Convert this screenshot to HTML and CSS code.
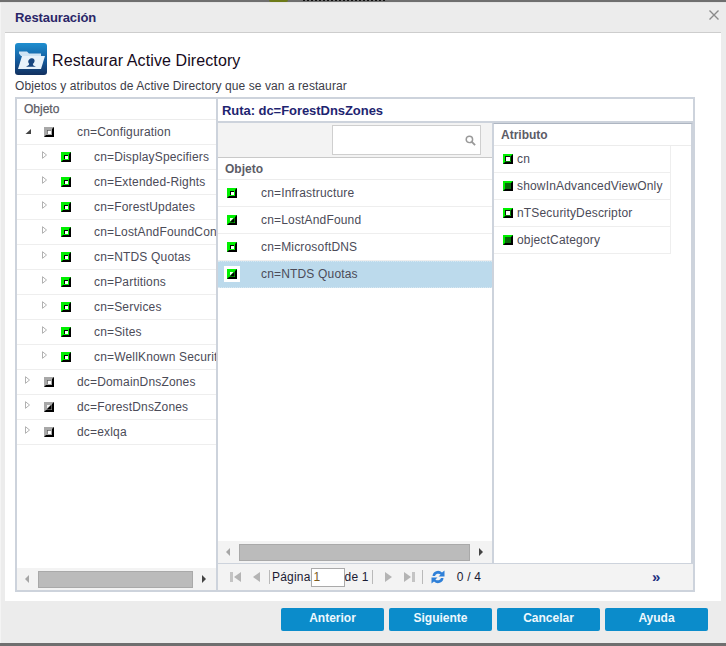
FILE: index.html
```html
<!DOCTYPE html>
<html lang="es">
<head>
<meta charset="utf-8">
<title>Restauración</title>
<link rel="stylesheet" href="styles.css">
</head>
<body>
<svg class="defs" width="0" height="0" aria-hidden="true">
  <symbol id="st-green" viewBox="0 0 10 10"><rect width="10" height="10" fill="#00f000"/><path d="M10 0V10H0L2 8H8V2Z" fill="#000"/><rect x="3" y="3" width="4" height="4" fill="#000"/><rect x="4" y="4" width="3" height="3" fill="#fff"/></symbol>
  <symbol id="st-gray" viewBox="0 0 10 10"><rect width="10" height="10" fill="#a8a8a8"/><path d="M10 0V10H0L2 8H8V2Z" fill="#000"/><rect x="3" y="3" width="4" height="4" fill="#555"/><rect x="3.7" y="3.7" width="3.3" height="3.3" fill="#fff"/></symbol>
  <symbol id="st-green-half" viewBox="0 0 10 10"><rect width="10" height="10" fill="#00f000"/><path d="M10 0V10H0L2 8H8V2Z" fill="#000"/><path d="M2.5 7.5L7.5 2.5V7.5Z" fill="#000"/><path d="M3 6.5L6.5 3H3Z" fill="#fff"/></symbol>
  <symbol id="st-gray-half" viewBox="0 0 10 10"><rect width="10" height="10" fill="#a8a8a8"/><path d="M10 0V10H0L2 8H8V2Z" fill="#000"/><path d="M2.5 7.5L7.5 2.5V7.5Z" fill="#000"/><path d="M3 6.5L6.5 3H3Z" fill="#f4f4f4"/></symbol>
  <symbol id="st-dark" viewBox="0 0 10 10"><rect width="10" height="10" fill="#00f000"/><path d="M10 0V10H0L2 8H8V2Z" fill="#000"/><rect x="2" y="2" width="6" height="6" fill="#0a6a0a"/></symbol>
  <symbol id="st-white" viewBox="0 0 10 10"><rect width="10" height="10" fill="#00f000"/><path d="M10 0V10H0L2 8H8V2Z" fill="#000"/><rect x="2" y="2" width="5.5" height="5.5" fill="#111"/><rect x="3" y="3" width="4" height="4" fill="#fff"/></symbol>
  <symbol id="tw-open" viewBox="0 0 7 7"><path d="M.5 6L6 1V6Z" fill="#444"/></symbol>
  <symbol id="tw-closed" viewBox="0 0 5 8"><path d="M.5 .7L4.5 4L.5 7.3Z" fill="#fff" stroke="#a8a8a8" stroke-width=".9"/></symbol>
</svg>

<div class="topstrip"><span class="topstrip-dot"></span><span class="topstrip-dash"></span></div>

<div class="dialog">
  <header class="dialog-head">
    <h1 class="dialog-title">Restauración</h1>
    <svg class="close" viewBox="0 0 10 10" width="10" height="10"><path d="M.5 .5L9.5 9.5M9.5 .5L.5 9.5" stroke="#8a8a8a" stroke-width="1.4" fill="none"/></svg>
  </header>

  <main class="dialog-body">
    <div class="page-title">
      <svg class="folder" viewBox="0 0 32 32" width="32" height="32">
        <defs><linearGradient id="fb" x1="0" y1="0" x2="0" y2="1"><stop offset="0" stop-color="#1e8fd0"/><stop offset=".55" stop-color="#145a9c"/><stop offset="1" stop-color="#12305f"/></linearGradient></defs>
        <rect width="32" height="32" rx="3" fill="url(#fb)"/>
        <path d="M4 10.5V8.5H12L14 10.5H26V13H6Z" fill="#cfe4f4"/>
        <path d="M7 13H30L26 26H3Z" fill="#e8f2fa"/>
        <path d="M15.5 15.5c2.6-1 4.6.6 4 3-.3 1.2-1 2-1.7 2.5l.6 1.5 2.6 1.2H11l2.8-1.6.4-1.3c-.7-.6-1.2-1.6-.9-2.8.2-1 1-1.8 2.2-2.5Z" fill="#17467f"/>
      </svg>
      <h2 class="page-heading">Restaurar Active Directory</h2>
    </div>
    <p class="desc">Objetos y atributos de Active Directory que se van a restaurar</p>

    <div class="panels">
      <section class="tree-panel">
        <div class="col-head tree-head">Objeto</div>
        <div class="tree-rows">
          <div class="row tree-row l0"><svg class="tw tw-o"><use href="#tw-open"/></svg><svg class="st"><use href="#st-gray"/></svg><span class="lbl">cn=Configuration</span></div>
          <div class="row tree-row l1"><svg class="tw"><use href="#tw-closed"/></svg><svg class="st"><use href="#st-green"/></svg><span class="lbl">cn=DisplaySpecifiers</span></div>
          <div class="row tree-row l1"><svg class="tw"><use href="#tw-closed"/></svg><svg class="st"><use href="#st-green"/></svg><span class="lbl">cn=Extended-Rights</span></div>
          <div class="row tree-row l1"><svg class="tw"><use href="#tw-closed"/></svg><svg class="st"><use href="#st-green"/></svg><span class="lbl">cn=ForestUpdates</span></div>
          <div class="row tree-row l1"><svg class="tw"><use href="#tw-closed"/></svg><svg class="st"><use href="#st-green"/></svg><span class="lbl">cn=LostAndFoundConfig</span></div>
          <div class="row tree-row l1"><svg class="tw"><use href="#tw-closed"/></svg><svg class="st"><use href="#st-green"/></svg><span class="lbl">cn=NTDS Quotas</span></div>
          <div class="row tree-row l1"><svg class="tw"><use href="#tw-closed"/></svg><svg class="st"><use href="#st-green"/></svg><span class="lbl">cn=Partitions</span></div>
          <div class="row tree-row l1"><svg class="tw"><use href="#tw-closed"/></svg><svg class="st"><use href="#st-green"/></svg><span class="lbl">cn=Services</span></div>
          <div class="row tree-row l1"><svg class="tw"><use href="#tw-closed"/></svg><svg class="st"><use href="#st-green"/></svg><span class="lbl">cn=Sites</span></div>
          <div class="row tree-row l1"><svg class="tw"><use href="#tw-closed"/></svg><svg class="st"><use href="#st-green"/></svg><span class="lbl">cn=WellKnown Security</span></div>
          <div class="row tree-row l0"><svg class="tw"><use href="#tw-closed"/></svg><svg class="st"><use href="#st-gray"/></svg><span class="lbl">dc=DomainDnsZones</span></div>
          <div class="row tree-row l0"><svg class="tw"><use href="#tw-closed"/></svg><svg class="st"><use href="#st-gray-half"/></svg><span class="lbl">dc=ForestDnsZones</span></div>
          <div class="row tree-row l0"><svg class="tw"><use href="#tw-closed"/></svg><svg class="st"><use href="#st-gray"/></svg><span class="lbl">dc=exlqa</span></div>
        </div>
        <div class="scrollbar sb-tree"><span class="arrow arrow-l"></span><span class="thumb"></span><span class="arrow arrow-r"></span></div>
      </section>

      <section class="detail">
        <div class="path">Ruta: dc=ForestDnsZones</div>
        <div class="detail-cols">
          <div class="objects">
            <div class="toolbar">
              <div class="search">
                <svg class="search-ico" viewBox="0 0 12 12" width="11" height="11"><circle cx="4.8" cy="4.8" r="3.5" fill="none" stroke="#999" stroke-width="1.6"/><path d="M7.5 7.5L11 11" stroke="#999" stroke-width="2"/></svg>
              </div>
            </div>
            <div class="col-head obj-head">Objeto</div>
            <div class="obj-rows">
              <div class="row obj-row"><span class="st-wrap"><svg class="st"><use href="#st-green"/></svg></span><span class="lbl">cn=Infrastructure</span></div>
              <div class="row obj-row"><span class="st-wrap"><svg class="st"><use href="#st-green-half"/></svg></span><span class="lbl">cn=LostAndFound</span></div>
              <div class="row obj-row"><span class="st-wrap"><svg class="st"><use href="#st-green"/></svg></span><span class="lbl">cn=MicrosoftDNS</span></div>
              <div class="row obj-row selected"><span class="st-wrap"><svg class="st"><use href="#st-green-half"/></svg></span><span class="lbl">cn=NTDS Quotas</span></div>
            </div>
            <div class="scrollbar sb-obj"><span class="arrow arrow-l"></span><span class="thumb"></span><span class="arrow arrow-r"></span></div>
          </div>
          <div class="attrs">
            <div class="col-head attr-head">Atributo</div>
            <div class="row attr-row"><svg class="st"><use href="#st-white"/></svg><span class="lbl">cn</span></div>
            <div class="row attr-row"><svg class="st"><use href="#st-dark"/></svg><span class="lbl">showInAdvancedViewOnly</span></div>
            <div class="row attr-row"><svg class="st"><use href="#st-white"/></svg><span class="lbl">nTSecurityDescriptor</span></div>
            <div class="row attr-row"><svg class="st"><use href="#st-dark"/></svg><span class="lbl">objectCategory</span></div>
          </div>
        </div>
        <div class="pager">
          <svg class="pg" viewBox="0 0 14 14" width="14" height="14"><rect x="1" y="2" width="3" height="10" fill="#c4c4c4"/><path d="M12 2V12L5 7Z" fill="#b4b4b4"/></svg>
          <svg class="pg pg-prev" viewBox="0 0 10 14" width="10" height="14"><path d="M8 2V12L1 7Z" fill="#b4b4b4"/></svg>
          <span class="sep sep-a"></span>
          <span class="pg-text">Página</span><span class="pg-input">1</span><span class="pg-text">de 1</span>
          <span class="sep sep-b"></span>
          <svg class="pg pg-next" viewBox="0 0 10 14" width="10" height="14"><path d="M2 2V12L9 7Z" fill="#b4b4b4"/></svg>
          <svg class="pg pg-last" viewBox="0 0 14 14" width="14" height="14"><rect x="10" y="2" width="3" height="10" fill="#c4c4c4"/><path d="M2 2V12L9 7Z" fill="#b4b4b4"/></svg>
          <span class="sep sep-b"></span>
          <svg class="refresh" viewBox="0 0 16 16" width="16" height="16"><path d="M2.5 7A5.5 5.5 0 0 1 12 3.6L14.5 1.5V7.5H8.5L10.6 5.6A3.4 3.4 0 0 0 5 7Z" fill="#2f80d8"/><path d="M13.5 9A5.5 5.5 0 0 1 4 12.4L1.5 14.5V8.5H7.5L5.4 10.4A3.4 3.4 0 0 0 11 9Z" fill="#2f80d8"/></svg>
          <span class="pg-count">0 / 4</span>
          <span class="more">»</span>
        </div>
      </section>
    </div>
  </main>

  <footer class="dialog-foot">
    <button class="btn">Anterior</button>
    <button class="btn">Siguiente</button>
    <button class="btn">Cancelar</button>
    <button class="btn">Ayuda</button>
  </footer>
</div>
<div class="bottomstrip"></div>
</body>
</html>
```
FILE: styles.css
```css
* { box-sizing: border-box; }
html, body { margin: 0; padding: 0; }
body {
  width: 726px;
  height: 646px;
  overflow: hidden;
  background: #ececec;
  font-family: "Liberation Sans", Arial, sans-serif;
  font-size: 12px;
  color: #4b4b58;
  display: flex;
  flex-direction: column;
}
.defs { display: block; height: 0; width: 0; }
.topstrip {
  height: 3px;
  flex: none;
  background: #6f6f6f;
  border-bottom: 1px solid #e4e4e4;
  overflow: hidden;
  display: flex;
  align-items: flex-start;
  padding-left: 269px;
}
.topstrip-dot { width: 19px; height: 2px; background: #6d7a18; border-radius: 0 0 9px 9px; }
.topstrip-dash {
  width: 84px;
  height: 1px;
  margin-left: 15px;
  background: repeating-linear-gradient(90deg, #111 0 2px, transparent 2px 4px);
}
.dialog {
  flex: 1;
  min-height: 0;
  display: flex;
  flex-direction: column;
  padding-left: 5px;
  padding-right: 5px;
  border-left: 1px solid #f4f4f4;
}
.dialog-head {
  height: 30px;
  flex: none;
  border-bottom: 1px solid #cdcdcd;
  display: flex;
  align-items: center;
  justify-content: space-between;
  padding-left: 10px;
  margin-left: -1px;
}
.dialog-title {
  margin: 0;
  font-size: 13px;
  font-weight: bold;
  color: #2a2668;
  letter-spacing: -.1px;
}
.close { margin-top: -5px; margin-right: 2px; }
.dialog-body {
  background: #fff;
  height: 568px;
  flex: none;
  margin-left: -1px;
  padding: 10px 0 0 10px;
  width: 716px;
}
.page-title { display: flex; align-items: center; height: 32px; }
.folder { flex: none; }
.page-heading {
  margin: 4px 0 0 5px;
  font-size: 16px;
  font-weight: normal;
  color: #160a20;
  letter-spacing: .1px;
}
.desc { margin: 4px 0 0; height: 18px; line-height: 15px; color: #3c3c48; letter-spacing: .08px; }
.panels {
  display: flex;
  width: 680px;
  height: 495px;
  border: 2px solid #cdd3dc;
}
.tree-panel {
  width: 201px;
  flex: none;
  display: flex;
  flex-direction: column;
  border-right: 2px solid #cdd3dc;
}
.col-head {
  font-weight: bold;
  color: #5c5c66;
  border-bottom: 1px solid #ececec;
  display: flex;
  align-items: center;
}
.tree-head { height: 21px; padding-left: 7px; font-weight: normal; -webkit-text-stroke: .25px #5c5c66; }
.tree-rows { flex: 1; min-height: 0; overflow: hidden; }
.row { display: flex; align-items: center; white-space: nowrap; overflow: hidden; }
.tree-row { height: 25px; border-bottom: 1px solid #eeeeee; padding-bottom: 1px; }
.lbl { letter-spacing: .17px; }
.tw { width: 5px; height: 8px; flex: none; margin-top: -3px; }
.tw-o { width: 7px; height: 7px; margin-top: -1px; margin-right: -2px; }
.st { width: 10px; height: 10px; flex: none; }
.l0 { padding-left: 8px; }
.l0 .st { margin-left: 14px; }
.l0 .lbl { margin-left: 23px; }
.l1 { padding-left: 25px; }
.l1 .st { margin-left: 14px; }
.l1 .lbl { margin-left: 23px; }
.scrollbar {
  display: flex;
  align-items: center;
  background: #f3f3f3;
  flex: none;
}
.thumb { display: block; background: #bbbbbb; border: 1px solid #a9a9a9; height: 17px; }
.arrow { width: 0; height: 0; border-top: 4px solid transparent; border-bottom: 4px solid transparent; display: block; flex: none; }
.arrow-l { border-right: 4px solid #a6a6a6; }
.arrow-r { border-left: 4px solid #444; }
.sb-tree { height: 22px; padding-left: 8px; }
.sb-tree .thumb { width: 155px; margin-left: 9px; margin-right: 9px; }
.detail { flex: 1; min-width: 0; display: flex; flex-direction: column; }
.path {
  height: 24px;
  flex: none;
  padding-left: 4px;
  display: flex;
  align-items: center;
  font-size: 13px;
  font-weight: bold;
  color: #1e2470;
  border-bottom: 2px solid #cdd3dc;
  letter-spacing: -.05px;
}
.detail-cols { flex: 1; min-height: 0; display: flex; }
.objects { width: 275px; flex: none; display: flex; flex-direction: column; border-right: 1px solid #cdd3dc; }
.toolbar {
  height: 35px;
  flex: none;
  background: #f3f3f3;
  display: flex;
  justify-content: flex-end;
  align-items: flex-start;
  padding-top: 2px;
  padding-right: 11px;
  border-bottom: 1px solid #c9c9c9;
}
.search {
  width: 149px;
  height: 30px;
  background: #fff;
  border: 1px solid #cfcfcf;
  display: flex;
  align-items: center;
  justify-content: flex-end;
  padding-right: 4px;
}
.obj-head { height: 22px; padding-left: 7px; }
.obj-rows { flex: 1; min-height: 0; }
.obj-row { height: 27px; border-bottom: 1px solid #eeeeee; padding-left: 6px; }
.st-wrap { width: 16px; height: 16px; display: flex; align-items: center; justify-content: center; flex: none; }
.obj-row .lbl { margin-left: 21px; }
.selected { background: #bcdaec; border-top: 1px dotted #d8e8f2; border-bottom: 1px dotted #d8e8f2; padding-bottom: 1px; }
.selected .st-wrap { background: #fff; }
.sb-obj { height: 22px; padding-left: 8px; }
.sb-obj .thumb { width: 231px; margin-left: 9px; margin-right: 9px; }
.attrs { flex: 1; min-width: 0; border-left: 1px solid #cdd3dc; border-top: 1px solid #aeb6c2; border-right: 2px solid #cdd3dc; }
.attr-head { height: 22px; padding-left: 7px; }
.attr-row { height: 27px; width: 177px; border-bottom: 1px solid #eeeeee; border-right: 1px solid #eeeeee; padding-left: 9px; }
.attr-row .lbl { margin-left: 4px; }
.pager {
  height: 27px;
  flex: none;
  background: #f3f3f3;
  border-top: 1px solid #cdd3dc;
  display: flex;
  align-items: center;
  padding-left: 11px;
  color: #1b1b33;
}
.pg { flex: none; }
.pg-prev { margin-left: 9px; }
.sep { width: 1px; height: 14px; background: #b9b9b9; flex: none; margin-right: 1px; }
.sep-a { margin-left: 7px; margin-right: 2px; }
.sep-b { margin-left: 3px; }
.pg-text { letter-spacing: .2px; }
.pg-input {
  width: 34px;
  height: 19px;
  background: #fff;
  border: 1px solid #aaa;
  padding-left: 2px;
  line-height: 17px;
  color: #7a5a20;
}
.pg-next { margin-left: 9px; }
.pg-last { margin-left: 9px; }
.pg-last + .sep-b { margin-left: 6px; }
.refresh { flex: none; margin-left: 6px; }
.pg-count { margin-left: 11px; letter-spacing: .2px; }
.more { margin-left: 171px; font-weight: bold; color: #1e2f7f; font-size: 15px; line-height: 12px; }
.dialog-foot {
  flex: 1;
  min-height: 0;
  display: flex;
  gap: 5px;
  justify-content: flex-end;
  padding-top: 7px;
  padding-right: 18px;
  margin-right: -5px;
}
.btn {
  width: 103px;
  height: 23px;
  border: 0;
  border-radius: 2px;
  background: #0b8ccb;
  color: #eef8fd;
  font: bold 12px "Liberation Sans", Arial, sans-serif;
  padding: 0 0 3px;
}
.bottomstrip { height: 3px; flex: none; background: #6f6f6f; }
```
